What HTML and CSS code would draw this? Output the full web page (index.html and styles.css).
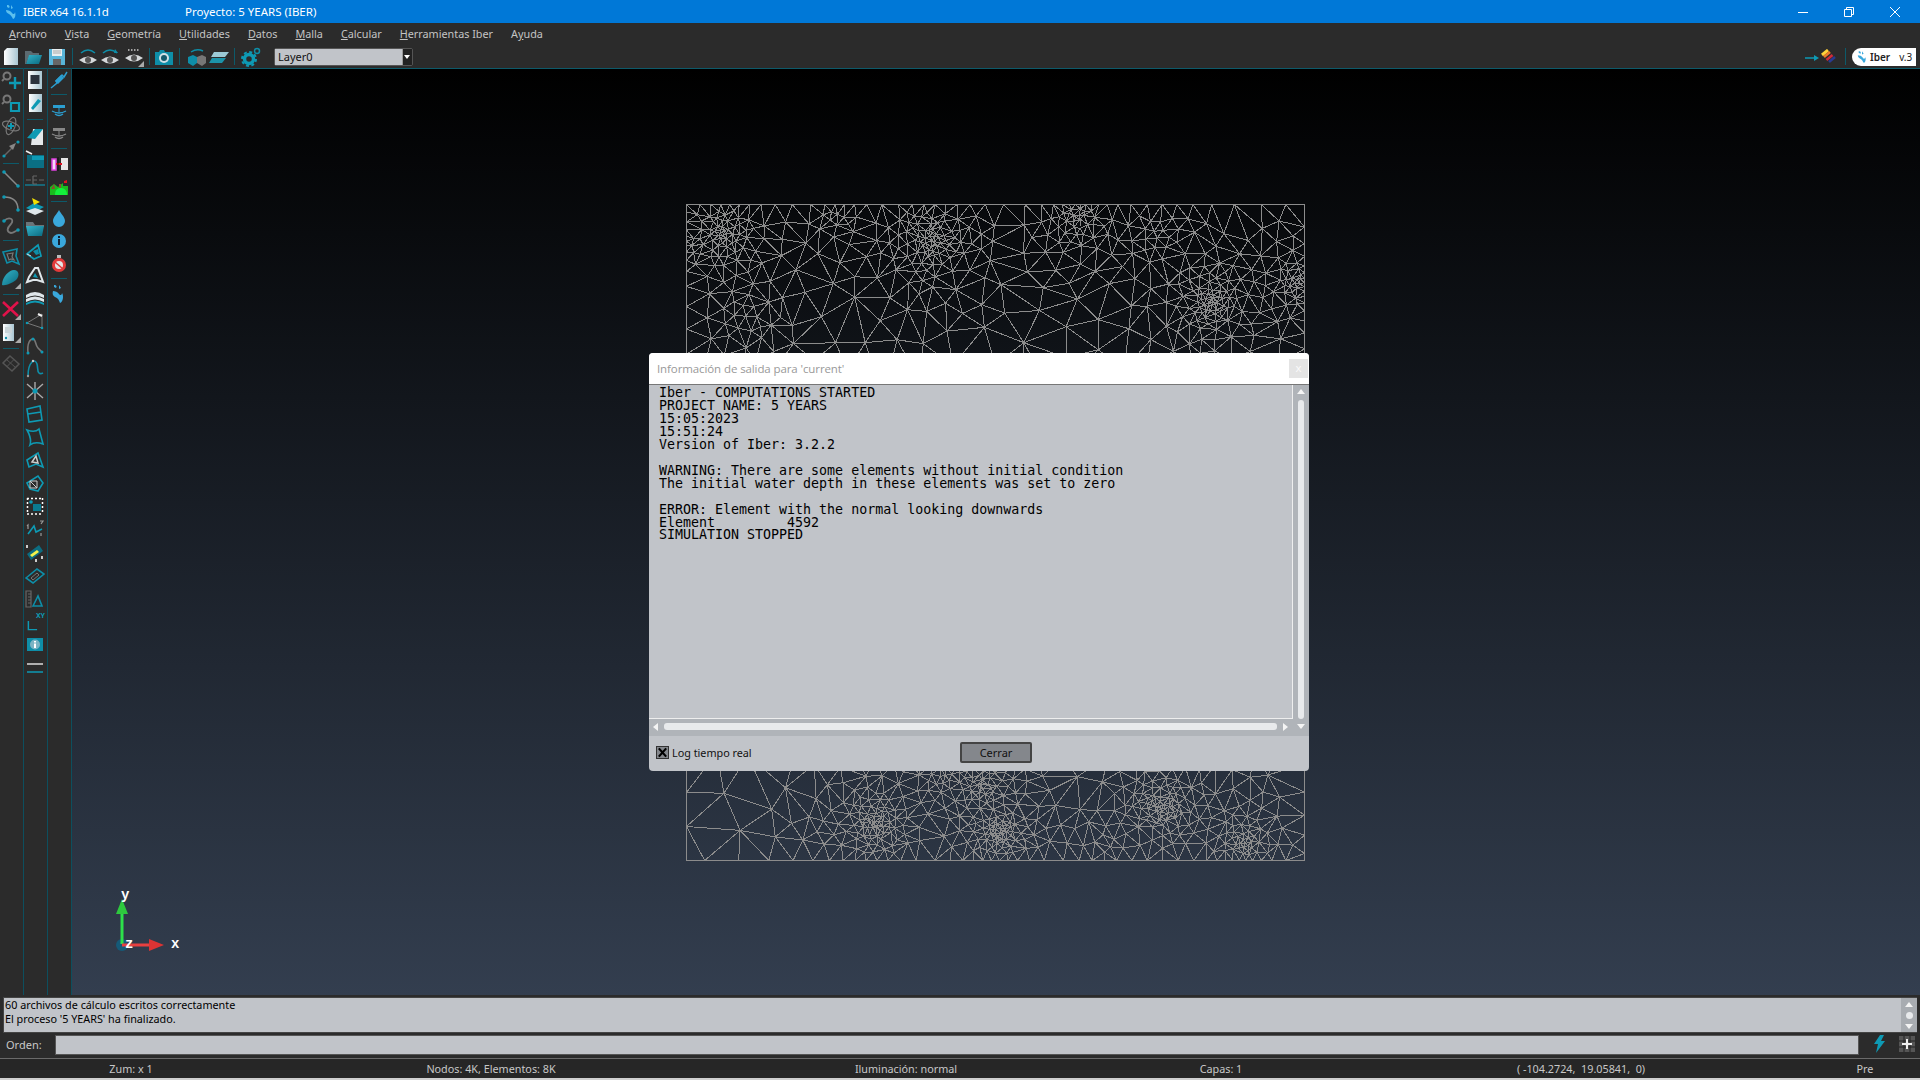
FILE: index.html
```html
<!DOCTYPE html>
<html lang="es">
<head>
  <meta charset="UTF-8">
  <title>IBER x64 16.1.1d</title>
  <link rel="stylesheet" href="styles.css">
</head>
<body>
  <!-- shared gradients -->
  <svg class="defs" aria-hidden="true">
    <linearGradient id="paper" x1="0" x2="1" y1="0" y2="0"><stop offset="0" stop-color="#fff"/><stop offset="1" stop-color="#a9c6d2"/></linearGradient>
    <linearGradient id="tealg" x1="0" x2="1" y1="0" y2="1"><stop offset="0" stop-color="#35b4c9"/><stop offset="1" stop-color="#0a6a80"/></linearGradient>
  </svg>

  <header class="titlebar">
    <svg class="ic-logo" viewBox="0 0 12 16"><path d="M2 1c3 0 3 2 2 3L2 3zM6 1l2 3-2 1zM1 6c2 0 5 1 6 3 1 2 3 1 3-1 1 3 0 7-2 7-1-2-2-4-4-5-2-1-3-2-3-4z" fill="#5cc0ee"/></svg>
    <span class="app-name">IBER x64 16.1.1d</span>
    <span class="project-name">Proyecto: 5 YEARS (IBER)</span>
    <div class="win-controls">
      <button class="win-btn"><svg viewBox="0 0 12 12"><path d="M1 6.500h10" stroke="#fff"/></svg></button>
      <button class="win-btn"><svg viewBox="0 0 12 12"><path d="M1.500 3.500h7v7h-7zM3.500 3.500v-2h7v7h-2" fill="none" stroke="#fff"/></svg></button>
      <button class="win-btn"><svg viewBox="0 0 12 12"><path d="M1 1l10 10M11 1L1 11" stroke="#fff"/></svg></button>
    </div>
  </header>

  <nav class="menubar">
    <span><u>A</u>rchivo</span>
    <span><u>V</u>ista</span>
    <span><u>G</u>eometría</span>
    <span><u>U</u>tilidades</span>
    <span><u>D</u>atos</span>
    <span><u>M</u>alla</span>
    <span><u>C</u>alcular</span>
    <span><u>H</u>erramientas Iber</span>
    <span>A<u>y</u>uda</span>
  </nav>

  <div class="toolbar">
    <svg class="tb w1" viewBox="0 0 20 20"><path d="M6 1h11v17H3V4z" fill="url(#paper)"/></svg>
    <svg class="tb w2" viewBox="0 0 20 20"><path d="M2 4h6l2 2h6v3H6l-3 8H2z" fill="#5c6a70"/><path d="M6 8h13l-3 9H3z" fill="url(#tealg)"/></svg>
    <svg class="tb w3" viewBox="0 0 20 20"><path d="M2 2h16v16H2z" fill="#58b4d8"/><path d="M5 2h10v7H5z" fill="#e8eef0"/><path d="M6 4h8M6 6h8" stroke="#aaa"/><path d="M6 12h8v6H6z" fill="#666"/></svg>
    <i class="tb-sep"></i>
    <svg class="tb w4" viewBox="0 0 20 20"><path d="M3 6q7-6 14 0" fill="none" stroke="#0e8ea8" stroke-width="1.5"/><path d="M1 13q9-7 18 0-9 7-18 0z" fill="#d5d8da"/><circle cx="10" cy="13" r="3" fill="#555"/></svg>
    <svg class="tb w5" viewBox="0 0 20 20"><path d="M3 6q7-6 14 0" fill="none" stroke="#0e8ea8" stroke-width="1.5"/><path d="M15 2l3 4-4 0z" fill="#0e8ea8"/><path d="M1 13q9-7 18 0-9 7-18 0z" fill="#d5d8da"/><circle cx="10" cy="13" r="3" fill="#555"/></svg>
    <svg class="tb w6" viewBox="0 0 20 20"><path d="M4 3h12" stroke="#ccc" stroke-width="1.500" stroke-dasharray="1.500 1.500"/><path d="M1 11q9-7 18 0-9 7-18 0z" fill="#d5d8da"/><circle cx="10" cy="11" r="3" fill="#555"/><path d="M20 14v6h-6z" fill="#aaa"/></svg>
    <i class="tb-sep"></i>
    <svg class="tb w7" viewBox="0 0 20 20"><path d="M1 5h4l1-2h4l1 2h8v13H1z" fill="#0e8ea8"/><circle cx="10" cy="11" r="5" fill="#cfe0e6"/><circle cx="10" cy="11" r="3" fill="#135a6c"/></svg>
    <i class="tb-sep"></i>
    <svg class="tb w8" viewBox="0 0 20 20"><path d="M4 5q6-4 12-1" fill="none" stroke="#0e8ea8" stroke-width="1.500"/><path d="M1 10l5-2 4 2v6l-4 3-5-3z" fill="#0e8ea8"/><path d="M10 10l5-2 4 2v6l-4 3-5-3z" fill="#777"/></svg>
    <svg class="tb w9" viewBox="0 0 20 20"><path d="M5 5h15l-4 5H2z" fill="#9ccad6"/><path d="M3 11h14l-4 5H0z" fill="#1c93a9"/></svg>
    <i class="tb-sep"></i>
    <svg class="tb w10" viewBox="0 0 20 20"><circle cx="8" cy="12" r="4.500" fill="none" stroke="#0e9ab4" stroke-width="3.500"/><circle cx="8" cy="12" r="7" fill="none" stroke="#0e9ab4" stroke-width="2" stroke-dasharray="3 2.500"/><circle cx="16" cy="4" r="2.500" fill="none" stroke="#0e8ea8" stroke-width="1.500"/></svg>
    <div class="layer-select">
      <span class="layer-name">Layer0</span>
      <span class="layer-arrow"></span>
    </div>
    <div class="toolbar-right">
      <svg class="tb-rain" viewBox="0 0 32 16">
        <path d="M0 9h12" stroke="#0e9ab4" stroke-width="1.500"/><path d="M9 6l5 3-5 3z" fill="#0e9ab4"/>
        <path d="M17 6l6-5" stroke="#ffd23a" stroke-width="3"/><path d="M19 8l6-5" stroke="#ef7a2a" stroke-width="2.500"/>
        <path d="M21.500 11l6-5" stroke="#d22a3a" stroke-width="2.500"/><path d="M24 13l6-5" stroke="#2a3a90" stroke-width="2.500"/>
      </svg>
      <i class="tb-sep"></i>
      <div class="iber-pill">
        <svg class="pill-logo" viewBox="0 0 12 16"><path d="M2 1c3 0 3 2 2 3L2 3zM6 1l2 3-2 1zM1 6c2 0 5 1 6 3 1 2 3 1 3-1 1 3 0 7-2 7-1-2-2-4-4-5-2-1-3-2-3-4z" fill="#3aa8dc"/></svg>
        <span>Iber</span><span class="pill-ver">v.3</span>
      </div>
    </div>
  </div>

  <div class="workarea">
    <aside class="sidetools">
      <div class="tool-col">
        <svg class="t" viewBox="0 0 20 20"><circle cx="6" cy="6" r="3.500" fill="none" stroke="#777" stroke-width="2"/><path d="M1 11l2-2" stroke="#777" stroke-width="2"/><path d="M14 7v12M8 13h12" stroke="#0e9ab4" stroke-width="2.400"/></svg>
        <svg class="t" viewBox="0 0 20 20"><circle cx="6" cy="6" r="3.500" fill="none" stroke="#777" stroke-width="2"/><path d="M1 11l2-2" stroke="#777" stroke-width="2"/><path d="M10 10h8v8h-8z" fill="none" stroke="#0e9ab4" stroke-width="2.200"/></svg>
        <svg class="t" viewBox="0 0 20 20"><ellipse cx="10" cy="10" rx="9" ry="4" fill="none" stroke="#777" stroke-width="1.200" transform="rotate(20 10 10)"/><ellipse cx="10" cy="10" rx="4" ry="9" fill="none" stroke="#777" stroke-width="1.200" transform="rotate(20 10 10)"/><path d="M10 7v6M7 10h6" stroke="#0e9ab4" stroke-width="2"/></svg>
        <svg class="t" viewBox="0 0 20 20"><path d="M3 17L12 8" stroke="#666" stroke-width="1.500"/><path d="M15 4l-7 3 4 4z" fill="#888"/><circle cx="3" cy="17" r="1.600" fill="#0e9ab4"/><circle cx="17" cy="3" r="1.600" fill="#0e9ab4"/></svg>
        <i class="t-sep"></i>
        <svg class="t" viewBox="0 0 20 20"><path d="M3 3l14 14" stroke="#888" stroke-width="1.500"/><circle cx="3" cy="3" r="1.800" fill="#0e9ab4"/><circle cx="17" cy="17" r="1.800" fill="#0e9ab4"/></svg>
        <svg class="t" viewBox="0 0 20 20"><path d="M3 4q14 0 14 13" fill="none" stroke="#888" stroke-width="1.500"/><circle cx="3" cy="4" r="1.800" fill="#0e9ab4"/><circle cx="17" cy="17" r="1.800" fill="#0e9ab4"/></svg>
        <svg class="t" viewBox="0 0 20 20"><path d="M3 5c5-5 11-2 7 3-4 4-5 8 0 9 3 0 4-2 7-3" fill="none" stroke="#777" stroke-width="1.800"/><circle cx="3" cy="5" r="1.800" fill="#0e9ab4"/><circle cx="17" cy="14" r="1.800" fill="#0e9ab4"/></svg>
        <i class="t-sep"></i>
        <svg class="t" viewBox="0 0 20 20"><path d="M2 6l14-3-1 7 3 8-7-3-5 2z" fill="none" stroke="#0e8ea8" stroke-width="1.600"/><path d="M6 8l6-1-1 4 2 3-3-1-2 1z" fill="none" stroke="#777" stroke-width="1.200"/></svg>
        <svg class="t" viewBox="0 0 20 20"><path d="M1 16C1 8 8 1 13 1s6 6 2 10c-4 3-10 6-14 5z" fill="url(#tealg)"/><path d="M20 14v6h-6z" fill="#aaa"/></svg>
        <i class="t-sep"></i>
        <svg class="t" viewBox="0 0 20 20"><path d="M2 2l15 14M17 2L2 16" stroke="#e0124a" stroke-width="2.600"/><path d="M20 14v6h-6z" fill="#aaa"/></svg>
        <svg class="t" viewBox="0 0 20 20"><path d="M2 1h11v17H2z" fill="url(#paper)"/><circle cx="5" cy="15" r="1.200" fill="#0e8ea8"/><path d="M4 4h7v6H4z" fill="#c9d4d8"/><path d="M20 14v6h-6z" fill="#aaa"/></svg>
        <i class="t-sep"></i>
        <svg class="t" viewBox="0 0 20 20"><path d="M9 2l9 8-7 7-9-8z" fill="none" stroke="#555" stroke-width="1.500"/><path d="M5.500 5.500l9 8M13 5.500l-7 7" stroke="#555"/></svg>
      </div>
      <div class="tool-col">
        <svg class="t" viewBox="0 0 20 20"><path d="M3 1h14v18H3z" fill="url(#paper)"/><path d="M5.500 5h9v9h-9z" fill="#2b333d"/></svg>
        <svg class="t" viewBox="0 0 20 20"><path d="M4 1h13v18H4z" fill="url(#paper)"/><path d="M6 15l7-9 3 2-8 9z" fill="#0e9ab4"/></svg>
        <i class="t-sep long"></i>
        <svg class="t" viewBox="0 0 20 20"><path d="M8 2h10v16H6z" fill="#e4e8ea"/><path d="M2 11l8-9h8l-8 10z" fill="#0e9ab4"/></svg>
        <svg class="t" viewBox="0 0 20 20"><path d="M2 5h17v13H2z" fill="#0a6f84"/><path d="M7 6h12v4H7z" fill="#0e9ab4"/><path d="M1 1l6 3" stroke="#eee" stroke-width="1.600"/></svg>
        <svg class="t" viewBox="0 0 20 20"><path d="M0 12h20" stroke="#0e8ea8" stroke-width="1.200"/><path d="M1 7h5M14 7h5" stroke="#666"/><path d="M8 3h4M8 7h4M8 11h4M8 3v8" stroke="#666" stroke-width="1.200" fill="none"/></svg>
        <svg class="t" viewBox="0 0 20 20"><path d="M1 12l8-5 10 4-9 5z" fill="#0e9ab4"/><path d="M1 15l9 4 9-4-9-3z" fill="#dfe6ea"/><path d="M7 2l8 4-6 3z" fill="#f2e000"/></svg>
        <svg class="t" viewBox="0 0 20 20"><path d="M1 3h7l2 3h9v2H1z" fill="#6a7478"/><path d="M1 7h18l-2 10H3z" fill="url(#tealg)"/></svg>
        <svg class="t" viewBox="0 0 20 20"><path d="M2 12l11-9 3 11-7 3z" fill="none" stroke="#0e9ab4" stroke-width="1.800"/><path d="M8 9l5-2 1 5-3 1z" fill="#0e8ea8"/><path d="M2 12l4 2" stroke="#ddd"/></svg>
        <svg class="t" viewBox="0 0 20 20"><path d="M2 17l2-5 6-9 3 0 5 14-6-2-4 0z" fill="none" stroke="#dfe6ea" stroke-width="2"/><path d="M8 12l2-4 3 5z" fill="#0e9ab4"/></svg>
        <svg class="t" viewBox="0 0 20 20"><path d="M1 7q9-6 18 0v3q-9-5-18 0zM1 11q9-5 18 0v3q-9-5-18 0z" fill="#dfe6ea"/><path d="M1 15q9-5 18 0v2q-9-5-18 0z" fill="#0e9ab4"/></svg>
        <svg class="t" viewBox="0 0 20 20"><path d="M2 12L17 3M2 12l15 5M17 3v14" stroke="#777" fill="none"/><circle cx="2" cy="12" r="1.300" fill="#0e9ab4"/><circle cx="17" cy="17" r="1.300" fill="#0e9ab4"/><path d="M13 3l4 2" stroke="#eee" stroke-width="2"/></svg>
        <svg class="t" viewBox="0 0 20 20"><path d="M3 18C2 8 5 4 8 4s2 6 5 9 3 3 4 4" fill="none" stroke="#777" stroke-width="1.600"/><circle cx="3" cy="18" r="1.500" fill="#0e9ab4"/><circle cx="17" cy="17" r="1.500" fill="#0e9ab4"/><circle cx="8" cy="4" r="1.500" fill="#0e9ab4"/></svg>
        <svg class="t" viewBox="0 0 20 20"><path d="M3 18C3 9 5 6 7 4c2-2 4-1 5 2s0 7 2 9c1 1 2 1 4 0" fill="none" stroke="#0e8ea8" stroke-width="1.600"/><circle cx="3" cy="18" r="1.200" fill="#999"/><circle cx="8" cy="3" r="1.200" fill="#ccc"/></svg>
        <svg class="t" viewBox="0 0 20 20"><path d="M2 3l16 14M18 3L2 17M10 1v18" stroke="#aaa" stroke-width="1.400"/><circle cx="10" cy="10" r="2.500" fill="#0e9ab4"/></svg>
        <svg class="t" viewBox="0 0 20 20"><path d="M2 5l13-3 2 14-13 2zM3 10l13-2" fill="none" stroke="#0e9ab4" stroke-width="1.600"/></svg>
        <svg class="t" viewBox="0 0 20 20"><path d="M2 3q8 3 12-1l4 15q-8-3-13 1 2-6-3-15z" fill="none" stroke="#0e9ab4" stroke-width="1.600"/></svg>
        <svg class="t" viewBox="0 0 20 20"><path d="M2 10l11-7 5 14-7-3-7 3z" fill="none" stroke="#0e9ab4" stroke-width="1.600"/><path d="M7 12l4-6 2 7z" fill="none" stroke="#ccc" stroke-width="1.500"/></svg>
        <svg class="t" viewBox="0 0 20 20"><path d="M2 10l11-7 5 7-5 8-8-2z" fill="none" stroke="#0e9ab4" stroke-width="1.600"/><path d="M5 8h7v7H5zM5 8l7 7" fill="none" stroke="#ccc"/></svg>
        <svg class="t" viewBox="0 0 20 20"><path d="M2 2.500h16M2 18h16M2.500 2v16M17.500 2v16" stroke="#fff" stroke-width="1.500" stroke-dasharray="2 2" fill="none"/><path d="M8 8h8v7H8z" fill="#0a7a90"/><circle cx="6" cy="6" r="1.800" fill="#0e9ab4"/></svg>
        <svg class="t" viewBox="0 0 20 20"><path d="M3 15l6-8 2 6 6-3" fill="none" stroke="#0e9ab4" stroke-width="1.600"/><path d="M2 7l1-1v4M15 2h3l-2 3M16 14v3" fill="none" stroke="#999" stroke-width="1.200"/></svg>
        <svg class="t" viewBox="0 0 20 20"><path d="M2 12L14 3l4 6-12 9z" fill="#0c6c80"/><path d="M5 13l7-5 2 2-7 5z" fill="#f3f34a"/><path d="M1 3h2v3H1zM16 14h2v3h-2zM10 17h2v3h-2z" fill="#ccc"/></svg>
        <svg class="t" viewBox="0 0 20 20"><path d="M1 12L12 3l7 5-11 9z" fill="none" stroke="#0e8ea8" stroke-width="1.600"/><path d="M6 12l6-5 2 2-6 5z" fill="none" stroke="#777"/></svg>
        <svg class="t" viewBox="0 0 20 20"><path d="M1 2h5v16H1z" fill="none" stroke="#666" stroke-width="1.200"/><path d="M3 5h3M3 8h3M3 11h3M3 14h3" stroke="#666"/><path d="M8 17l5-10 4 10z" fill="none" stroke="#0e8ea8" stroke-width="1.600"/></svg>
        <div class="t t-xy"><span>XY</span><svg viewBox="0 0 12 12"><path d="M1.500 1v9.500H11" fill="none" stroke="#0e9ab4" stroke-width="1.600"/></svg></div>
        <svg class="t" viewBox="0 0 20 20"><path d="M2 3h16v13H2z" fill="#0e8ea8"/><circle cx="10" cy="9.500" r="5" fill="#7cb4c4"/><path d="M9 6h2v1.500H9zM9 8.500h2V13H9z" fill="#fff"/></svg>
        <svg class="t" viewBox="0 0 20 20"><path d="M2 6h16" stroke="#ddd" stroke-width="1.500"/><path d="M2 14h16" stroke="#0e9ab4" stroke-width="1.500"/></svg>
      </div>
      <div class="tool-col last">
        <svg class="t" viewBox="0 0 20 20"><path d="M2 18l6-5-1-2 6-6 2 2 3-5" fill="none" stroke="#2b9ed0" stroke-width="1.500"/><path d="M6 11l6-6 3 3-6 6z" fill="#2b9ed0"/></svg>
        <i class="t-sep"></i>
        <svg class="t" viewBox="0 0 20 20"><path d="M4 5h12v3H4z" fill="#2b9ed0"/><path d="M3 11q7 4 14 0M6 14q4 3 8 0" fill="none" stroke="#2b9ed0" stroke-width="1.400"/><path d="M10 8v4" stroke="#2b9ed0"/></svg>
        <svg class="t" viewBox="0 0 20 20"><path d="M4 5h12v3H4z" fill="#888"/><path d="M3 11q7 4 14 0M6 14q4 3 8 0" fill="none" stroke="#888" stroke-width="1.400"/><path d="M10 8v4" stroke="#888"/></svg>
        <i class="t-sep"></i>
        <svg class="t" viewBox="0 0 20 20"><path d="M3 5h4v11H3z" fill="#f5d8f5" stroke="#e040e0" stroke-width="1.500"/><path d="M12 4h7v12h-7z" fill="#e6e6e6"/><path d="M7 10h6" stroke="#e01020" stroke-width="2"/><path d="M9 3v14" stroke="#111"/></svg>
        <svg class="t" viewBox="0 0 20 20"><path d="M1 18V10l4-3 4 3 5-4v3h5v9z" fill="#1abb1e"/><path d="M6 18c0-5 2-7 6-7s6 3 6 7z" fill="#14f03c"/><path d="M5 7l1 5-4 0zM10 7h2v4h-2z" fill="#885030"/><path d="M15 4l3-1v3h-3z" fill="#e01020"/></svg>
        <i class="t-sep"></i>
        <svg class="t" viewBox="0 0 20 20"><path d="M10 2c2 4 6 7 6 11a6 6 0 0 1-12 0c0-4 4-7 6-11z" fill="#3aa8dc"/></svg>
        <svg class="t" viewBox="0 0 20 20"><circle cx="10" cy="10" r="7" fill="#3aa8dc"/><path d="M9 5h2v2H9zM9 8h2v6H9z" fill="#123"/></svg>
        <svg class="t" viewBox="0 0 20 20"><path d="M8 1h4v3H8z" fill="#bbb"/><circle cx="10" cy="11" r="7" fill="#e23a3a"/><circle cx="10" cy="11" r="4" fill="#e6e6e6"/><path d="M6 8l8 7" stroke="#e23a3a" stroke-width="1.500"/></svg>
        <i class="t-sep"></i>
        <svg class="t" viewBox="0 0 20 20"><path d="M5 1c3 0 3 2 2 3L5 3zM10 1l2 3-2 1zM4 7c2 0 5 1 6 3 1 2 3 1 3-1 2 3 1 9-2 10-1-3-2-5-5-6-2-1-3-3-2-6z" fill="#3aa8dc"/></svg>
      </div>
    </aside>

    <main class="viewport">
      <svg id="mesh" class="mesh" width="620" height="658" viewBox="0 0 620 658"></svg>

      <svg class="axes" width="90" height="80" viewBox="0 0 90 80">
        <circle cx="22" cy="61" r="6" fill="#155a78"/>
        <path d="M22 60V24" stroke="#2de04a" stroke-width="3"/>
        <path d="M22 15l-6 15h12z" fill="#2ec83e"/>
        <path d="M22 61h34" stroke="#e84040" stroke-width="3"/>
        <path d="M64 61l-15-6v12z" fill="#dc3434"/>
        <text x="21" y="15" class="axis-label">y</text>
        <text x="25" y="64" class="axis-label">z</text>
        <text x="71" y="64" class="axis-label">x</text>
      </svg>

      <section class="dialog">
        <div class="dlg-title">
          <span>Información de salida para 'current'</span>
          <span class="dlg-close">x</span>
        </div>
        <div class="dlg-main">
          <pre class="dlg-log">Iber - COMPUTATIONS STARTED
PROJECT NAME: 5 YEARS
15:05:2023
15:51:24
Version of Iber: 3.2.2

WARNING: There are some elements without initial condition
The initial water depth in these elements was set to zero

ERROR: Element with the normal looking downwards
Element         4592
SIMULATION STOPPED</pre>
          <div class="vscroll">
            <i class="arrow-up"></i>
            <i class="vthumb"></i>
          </div>
          <div class="hscroll">
            <i class="arrow-left"></i>
            <i class="hthumb"></i>
            <i class="arrow-right"></i>
          </div>
          <div class="scroll-end"><i class="arrow-down"></i></div>
        </div>
        <div class="dlg-foot">
          <label class="dlg-check"><span class="checkbox">
            <svg viewBox="0 0 12 12"><path d="M2 1.500l8 9M10 1.500l-8 9" stroke="#000" stroke-width="2.400"/></svg>
          </span>Log tiempo real</label>
          <button class="dlg-btn">Cerrar</button>
        </div>
      </section>
    </main>
  </div>

  <div class="messages">
    <div class="msg-text">60 archivos de cálculo escritos correctamente<br>El proceso '5 YEARS' ha finalizado.</div>
    <div class="msg-scroll">
      <i class="arrow-up"></i>
      <i class="msg-dot"></i>
      <i class="arrow-down"></i>
    </div>
  </div>

  <div class="command">
    <span class="cmd-label">Orden:</span>
    <div class="cmd-input"></div>
    <svg class="cmd-bolt" viewBox="0 0 12 18"><path d="M7 0h4L8 6h4L3 18l2-9H1z" fill="#0e9ab4"/></svg>
    <svg class="cmd-grid" viewBox="0 0 16 16">
      <path d="M0 0h16v16H0z" fill="#555"/>
      <path d="M0 5h16M0 11h16M5 0v16M11 0v16" stroke="#222"/>
      <path d="M8 3v10M3 8h10" stroke="#eee" stroke-width="2"/>
    </svg>
  </div>

  <footer class="statusbar">
    <span>Zum: x 1</span>
    <span>Nodos: 4K, Elementos: 8K</span>
    <span>Iluminación: normal</span>
    <span>Capas: 1</span>
    <span>( -104.2724,&nbsp; 19.05841,&nbsp; 0)</span>
    <span>Pre</span>
  </footer>

  <script src="mesh.js"></script>
</body>
</html>
```
FILE: styles.css
```css
* {
  box-sizing: border-box;
}
html, body {
  margin: 0;
  height: 100%;
}
body {
  width: 1920px;
  height: 1080px;
  overflow: hidden;
  display: flex;
  flex-direction: column;
  background: #2b2b2b;
  color: #c8c8c8;
  font-family: "Noto Sans", "Open Sans", sans-serif;
  font-size: 11px;
}
svg {
  display: block;
  flex: none;
}
.defs {
  width: 0;
  height: 0;
}

/* Title bar */
.titlebar {
  height: 23px;
  flex: none;
  display: flex;
  align-items: center;
  background: #0078d7;
  color: #fff;
  font-size: 11.5px;
  padding-left: 5px;
}
.ic-logo {
  width: 12px;
  height: 16px;
}
.app-name {
  margin-left: 6px;
  width: 162px;
  letter-spacing: -0.25px;
}
.win-controls {
  margin-left: auto;
  margin-right: 2px;
  display: flex;
}
.win-btn {
  width: 46px;
  height: 21px;
  border: 0;
  padding: 0 17px;
  margin: 0;
  background: none;
}
.win-btn svg {
  width: 12px;
  height: 12px;
}

/* Menu */
.menubar {
  height: 22px;
  flex: none;
  display: flex;
  align-items: center;
  gap: 18px;
  padding: 0 0 1px 9px;
  font-size: 10.8px;
  color: #c4c4c4;
}

/* Top toolbar */
.toolbar {
  height: 24px;
  flex: none;
  display: flex;
  align-items: center;
  padding: 0 4px 0 0;
  border-bottom: 1px solid #0d5a6a;
}
.tb {
  width: 20px;
  height: 20px;
  margin-left: 1px;
}
.tb.w2 { margin-left: 2px; }
.tb.w3 { margin-left: 4px; }
.tb.w4 { margin-left: 1px; }
.tb.w5 { margin-left: 2px; }
.tb.w6 { margin-left: 4px; }
.tb.w7 { margin-left: 0; }
.tb.w8 { margin-left: 3px; }
.tb.w9 { margin-left: 2px; }
.tb.w10 { margin-left: 2px; }
.tb-sep {
  width: 1px;
  height: 17px;
  margin: 0 4px 0 5px;
  background: #0d5a6a;
}
.layer-select {
  width: 139px;
  height: 18px;
  margin-left: 13px;
  display: flex;
  border: 1px solid #555;
  border-radius: 2px;
}
.layer-name {
  flex: 1;
  background: #c1c4c9;
  color: #111;
  padding-left: 3px;
  font-size: 11px;
  line-height: 16px;
}
.layer-arrow {
  width: 10px;
  background: #222;
  border-left: 1px solid #999;
  position: relative;
}
.layer-arrow::after {
  content: "";
  position: absolute;
  left: 1px;
  top: 6px;
  border: 3px solid transparent;
  border-top: 4px solid #fff;
}
.toolbar-right {
  margin-left: auto;
  display: flex;
  align-items: center;
}
.tb-rain {
  width: 32px;
  height: 16px;
}
.toolbar-right .tb-sep {
  margin: 0 6px 0 8px;
}
.iber-pill {
  width: 64px;
  height: 18px;
  border-radius: 9px 0 0 9px;
  background: #fff;
  color: #222;
  display: flex;
  align-items: center;
  padding-left: 5px;
  font-size: 10px;
  font-weight: 600;
}
.pill-logo {
  width: 10px;
  height: 14px;
  margin-right: 3px;
}
.pill-ver {
  margin-left: 9px;
  font-weight: 400;
}

/* Left tool columns + viewport */
.workarea {
  flex: 1;
  min-height: 0;
  display: flex;
}
.sidetools {
  width: 72px;
  flex: none;
  display: flex;
}
.tool-col {
  width: 24px;
  display: flex;
  flex-direction: column;
  align-items: center;
  padding-right: 1px;
  margin-top: -1px;
  border-right: 1px solid #0d4f5e;
}
.t {
  width: 20px;
  height: 20px;
  margin: 1.550px 0;
  flex: none;
}
.t-sep {
  width: 16px;
  height: 1px;
  margin: 3px 0 3.500px;
  background: #0d5a6a;
  flex: none;
}
.t-sep.long {
  margin: 5px 0;
}
.t-xy {
  color: #0e9ab4;
  font-size: 7px;
  font-weight: 700;
  line-height: 8px;
  text-align: right;
}
.t-xy svg {
  width: 11px;
  height: 11px;
  margin-left: 2px;
}
.viewport {
  flex: 1;
  position: relative;
  background: linear-gradient(180deg, #000 0%, #333e4f 100%);
}
.mesh {
  position: absolute;
  left: 614px;
  top: 135px;
}
.axes {
  position: absolute;
  left: 28px;
  top: 815px;
}
.axis-label {
  fill: #fff;
  font-family: "Liberation Mono", monospace;
  font-size: 14px;
  font-weight: 700;
}

/* Output dialog */
.dialog {
  position: absolute;
  left: 577px;
  top: 284px;
  width: 660px;
  height: 418px;
  display: flex;
  flex-direction: column;
  background: #c1c4c9;
  border-radius: 4px;
  overflow: hidden;
}
.dlg-title {
  height: 31px;
  flex: none;
  display: flex;
  align-items: center;
  justify-content: space-between;
  background: #fff;
  color: #999;
  padding: 0 1px 0 8px;
  font-family: "Open Sans", sans-serif;
  font-size: 11.5px;
  letter-spacing: -0.1px;
}
.dlg-close {
  width: 19px;
  height: 19px;
  background: #e4e4e4;
  color: #fafafa;
  text-align: center;
  line-height: 17px;
}
.dlg-main {
  height: 352px;
  flex: none;
  display: grid;
  grid-template-columns: 1fr 16px;
  grid-template-rows: 1fr 17px;
  border-top: 1px solid #777;
}
.dlg-log {
  margin: 0;
  padding: 2px 0 0 10px;
  border-right: 1px solid #eee;
  border-bottom: 1px solid #eee;
  color: #000;
  font-family: "DejaVu Sans Mono", monospace;
  font-size: 13.3px;
  line-height: 12.95px;
}
.vscroll,
.hscroll,
.scroll-end {
  background: #b0b4b9;
}
.vscroll {
  display: flex;
  flex-direction: column;
  align-items: center;
  padding-top: 4px;
}
.vthumb {
  width: 6px;
  flex: 1;
  margin-top: 6px;
  background: #e8eaec;
  border-radius: 3px;
}
.hscroll {
  display: flex;
  align-items: center;
  padding: 0 5px 2px 4px;
}
.hthumb {
  flex: 1;
  height: 7px;
  margin: 0 6px;
  background: #e8eaec;
  border-radius: 3px;
}
.scroll-end {
  display: flex;
  justify-content: center;
  padding-top: 5px;
}
.arrow-up,
.arrow-down,
.arrow-left,
.arrow-right {
  width: 0;
  height: 0;
  flex: none;
  border: 4.500px solid transparent;
}
.arrow-up {
  border-top: 0;
  border-bottom: 5px solid #f4f4f4;
}
.arrow-down {
  border-bottom: 0;
  border-top: 5px solid #f4f4f4;
}
.arrow-left {
  border-left: 0;
  border-right: 5px solid #f4f4f4;
}
.arrow-right {
  border-right: 0;
  border-left: 5px solid #f4f4f4;
}
.dlg-foot {
  flex: 1;
  display: flex;
  align-items: center;
  padding: 0 0 2px 7px;
  color: #111;
  font-size: 10.8px;
}
.dlg-check {
  width: 304px;
  display: flex;
  align-items: center;
  gap: 3px;
}
.checkbox {
  width: 13px;
  height: 13px;
  padding: 0;
  background: #84878c;
  border: 1px solid #333;
}
.checkbox svg {
  width: 11px;
  height: 11px;
}
.dlg-btn {
  width: 72px;
  height: 21px;
  padding: 0;
  background: #84878c;
  border: 2px solid #444;
  border-radius: 2px;
  color: #111;
  font-family: inherit;
  font-size: 11px;
}

/* Bottom areas */
.messages {
  height: 36px;
  flex: none;
  display: flex;
  margin: 2px 3px 2px 3px;
  border: 1px solid #444;
  border-right: 0;
}
.msg-text {
  flex: 1;
  padding-left: 1px;
  background: #c1c4c9;
  color: #000;
  font-size: 10.8px;
  line-height: 14px;
}
.msg-scroll {
  width: 16px;
  display: flex;
  flex-direction: column;
  align-items: center;
  gap: 5px;
  padding-top: 4px;
  background: #a8acb1;
}
.msg-dot {
  width: 7px;
  height: 7px;
  border-radius: 50%;
  background: #e8eaec;
}
.command {
  height: 23px;
  flex: none;
  display: flex;
  align-items: flex-start;
  padding-left: 6px;
}
.cmd-label {
  width: 49px;
  font-size: 11px;
  line-height: 20px;
}
.cmd-input {
  width: 1804px;
  height: 20px;
  background: #c1c4c9;
  border: 1px solid #555;
}
.cmd-bolt {
  width: 12px;
  height: 18px;
  margin-left: 14px;
}
.cmd-grid {
  width: 16px;
  height: 16px;
  margin: 1px 0 0 14px;
}
.statusbar {
  height: 22px;
  flex: none;
  display: grid;
  grid-template-columns: 262px 458px 372px 258px 462px 106px;
  align-items: center;
  text-align: center;
  font-size: 10.8px;
  border-top: 1px solid #6a6a6a;
  border-bottom: 2px solid #d0d0d0;
  background: #262626;
}
```
FILE: mesh.js
```js
// Triangle mesh in the viewport: dart-throw points with a size field, then Delaunay
const W = 618, H = 656;
// dense spots, in mesh coordinates [x, y, smallest edge]
const spots = [
  [36, 29, 2], [244, 35, 2], [391, 10, 3], [526, 96, 2], [612, 78, 3], [150, 10, 8], [470, 30, 8],
  [0, 40, 5], [60, 110, 8],
  [189, 619, 1.5], [294, 580, 2], [312, 629, 1.5], [475, 602, 1.5], [557, 641, 3], [255, 570, 5], [420, 640, 9]
];
let seed = 7;
function rnd() {
  seed = (seed * 16807) % 2147483647;
  return seed / 2147483647;
}

function sizeAt(x, y) {
  let h = 40;
  if (y > 90 && y < 200) h = 52;
  for (const s of spots) {
    const d = Math.hypot(x - s[0], y - s[1]);
    h = Math.min(h, s[2] + d * 0.3);
  }
  return h;
}

const pts = [];
function tooClose(x, y, h) {
  for (const p of pts) {
    const dx = p[0] - x, dy = p[1] - y;
    if (dx * dx + dy * dy < h * h * 0.55) return true;
  }
  return false;
}

// boundary first, so the outline stays straight
function edgeRun(x0, y0, x1, y1) {
  const len = Math.hypot(x1 - x0, y1 - y0);
  let t = 0;
  while (t < len) {
    const x = x0 + (x1 - x0) * t / len, y = y0 + (y1 - y0) * t / len;
    pts.push([x, y]);
    t += sizeAt(x, y) * 0.85;
  }
}
edgeRun(0, 0, W, 0);
edgeRun(W, 0, W, H);
edgeRun(W, H, 0, H);
edgeRun(0, H, 0, 0);

for (let i = 0; i < 45000; i++) {
  const x = rnd() * W, y = rnd() * H;
  if (x < 3 || y < 3 || x > W - 3 || y > H - 3) continue;
  // the part under the dialog is never seen
  if (y > 175 && y < 545 && i % 3) continue;
  if (!tooClose(x, y, sizeAt(x, y))) pts.push([x, y]);
}

function circum(a, b, c) {
  const A = pts[a], B = pts[b], C = pts[c];
  const d = 2 * (A[0] * (B[1] - C[1]) + B[0] * (C[1] - A[1]) + C[0] * (A[1] - B[1]));
  const a2 = A[0] * A[0] + A[1] * A[1], b2 = B[0] * B[0] + B[1] * B[1], c2 = C[0] * C[0] + C[1] * C[1];
  const x = (a2 * (B[1] - C[1]) + b2 * (C[1] - A[1]) + c2 * (A[1] - B[1])) / d;
  const y = (a2 * (C[0] - B[0]) + b2 * (A[0] - C[0]) + c2 * (B[0] - A[0])) / d;
  return { a, b, c, x, y, r: (A[0] - x) ** 2 + (A[1] - y) ** 2 };
}

// Bowyer-Watson
const n = pts.length;
pts.push([-5000, -5000], [7000, -5000], [300, 9000]);
let tris = [circum(n, n + 1, n + 2)];
for (let i = 0; i < n; i++) {
  const p = pts[i];
  const keep = [], edges = new Map();
  for (const t of tris) {
    if ((p[0] - t.x) ** 2 + (p[1] - t.y) ** 2 < t.r) {
      for (const [u, v] of [[t.a, t.b], [t.b, t.c], [t.c, t.a]]) {
        const k = u < v ? u + '_' + v : v + '_' + u;
        if (edges.has(k)) edges.set(k, null); else edges.set(k, [u, v]);
      }
    } else {
      keep.push(t);
    }
  }
  for (const e of edges.values()) {
    if (e) keep.push(circum(e[0], e[1], i));
  }
  tris = keep;
}

const seen = new Set();
let d = '';
for (const t of tris) {
  for (const [u, v] of [[t.a, t.b], [t.b, t.c], [t.c, t.a]]) {
    if (u >= n || v >= n) continue;
    const k = u < v ? u + '_' + v : v + '_' + u;
    if (seen.has(k)) continue;
    seen.add(k);
    d += 'M' + pts[u][0].toFixed(1) + ' ' + pts[u][1].toFixed(1) + 'L' + pts[v][0].toFixed(1) + ' ' + pts[v][1].toFixed(1);
  }
}
const path = document.createElementNS('http://www.w3.org/2000/svg', 'path');
path.setAttribute('d', d);
path.setAttribute('fill', 'none');
path.setAttribute('stroke', '#8c8c8c');
path.setAttribute('shape-rendering', 'crispEdges');
path.setAttribute('transform', 'translate(0.5 0.5)');
document.getElementById('mesh').appendChild(path);
```
